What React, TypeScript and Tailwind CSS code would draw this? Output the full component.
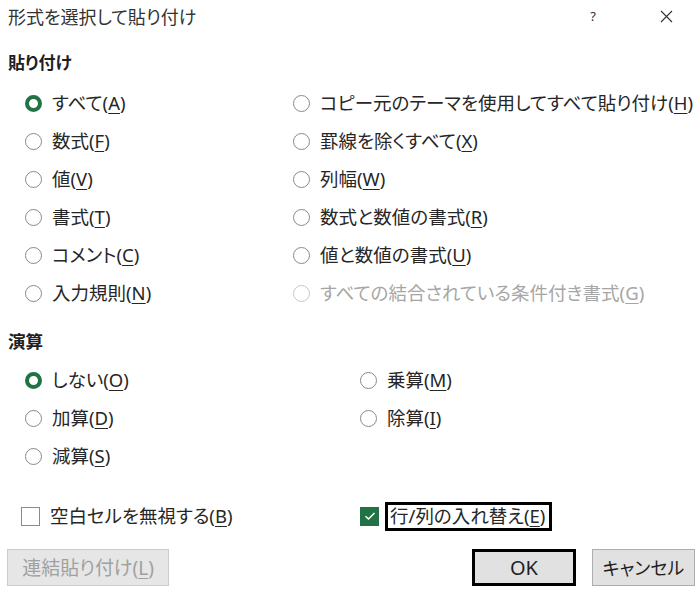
import React from 'react'

function Radio({ checked, disabled }: { checked?: boolean; disabled?: boolean }) {
  if (checked) {
    return <span className="box-border inline-block h-[17px] w-[17px] shrink-0 rounded-full border-[4px] border-[#217346] bg-white" />
  }
  return (
    <span
      className={
        'box-border inline-block h-[17px] w-[17px] shrink-0 rounded-full border bg-white ' +
        (disabled ? 'border-[#c8c8c8]' : 'border-[#8a8a8a]')
      }
    />
  )
}

function Label({ text, k, disabled }: { text: string; k: string; disabled?: boolean }) {
  return (
    <span className={'whitespace-nowrap leading-[24px] ' + (disabled ? 'text-[#a6a6a6]' : 'text-[#262626]')}>
      {text}(<span className="underline decoration-1 underline-offset-[3px]">{k}</span>)
    </span>
  )
}

function Opt({ text, k, checked, disabled }: { text: string; k: string; checked?: boolean; disabled?: boolean }) {
  return (
    <div className="flex h-[38px] items-center gap-[10px]">
      <Radio checked={checked} disabled={disabled} />
      <Label text={text} k={k} disabled={disabled} />
    </div>
  )
}

export default function App() {
  const pasteLeft = [
    { text: 'すべて', k: 'A', checked: true },
    { text: '数式', k: 'F' },
    { text: '値', k: 'V' },
    { text: '書式', k: 'T' },
    { text: 'コメント', k: 'C' },
    { text: '入力規則', k: 'N' },
  ]
  const pasteRight = [
    { text: 'コピー元のテーマを使用してすべて貼り付け', k: 'H' },
    { text: '罫線を除くすべて', k: 'X' },
    { text: '列幅', k: 'W' },
    { text: '数式と数値の書式', k: 'R' },
    { text: '値と数値の書式', k: 'U' },
    { text: 'すべての結合されている条件付き書式', k: 'G', disabled: true },
  ]

  return (
    <div className="h-[591px] w-[700px] overflow-hidden bg-white text-[18.5px] text-[#262626] [font-family:'Noto_Sans','Noto_Sans_CJK_JP',sans-serif] [font-feature-settings:'palt']">
      {/* title bar */}
      <div className="flex h-[33px] items-center pl-[8px]">
        <span className="text-[18px] leading-[24px] text-[#333]">形式を選択して貼り付け</span>
        <span className="ml-auto w-[20px] text-center text-[13px] text-[#333]">?</span>
        <span className="ml-[53px] mr-[24px] flex w-[20px] justify-center">
          <svg width="13" height="13" viewBox="0 0 13 13">
            <path d="M1 1L12 12M12 1L1 12" stroke="#333" strokeWidth="1.1" />
          </svg>
        </span>
      </div>

      <div className="mt-[17px] flex h-[26px] items-center pl-[8px] text-[17px] font-bold text-[#1f1f1f]">貼り付け</div>

      <div className="mt-[8px] grid grid-cols-[268px_1fr] pl-[25px]">
        <div className="flex flex-col">
          {pasteLeft.map((o) => (
            <Opt key={o.k} {...o} />
          ))}
        </div>
        <div className="flex flex-col">
          {pasteRight.map((o) => (
            <Opt key={o.k} {...o} />
          ))}
        </div>
      </div>

      <div className="mt-[16px] flex h-[26px] items-center pl-[8px] text-[17.5px] font-bold text-[#1f1f1f]">演算</div>

      <div className="mt-[7px] grid grid-cols-[335px_1fr] pl-[25px]">
        <div className="flex flex-col">
          <Opt text="しない" k="O" checked />
          <Opt text="加算" k="D" />
          <Opt text="減算" k="S" />
        </div>
        <div className="flex flex-col">
          <Opt text="乗算" k="M" />
          <Opt text="除算" k="I" />
        </div>
      </div>

      <div className="mt-[22px] grid h-[38px] grid-cols-[339px_1fr] items-center pl-[21px]">
        <div className="flex items-center gap-[10px]">
          <span className="box-border inline-block h-[19px] w-[19px] border-[1.5px] border-[#8a8a8a] bg-white" />
          <Label text="空白セルを無視する" k="B" />
        </div>
        <div className="flex items-center gap-[6px]">
          <span className="flex h-[19px] w-[19px] items-center justify-center bg-[#217346]">
            <svg width="12" height="10" viewBox="0 0 12 10">
              <path d="M1.5 5.2L4.5 8L10.5 2" fill="none" stroke="white" strokeWidth="1.5" />
            </svg>
          </span>
          <span className="flex h-[29px] items-center border-[3px] border-black pl-[2px] pr-[4px]">
            <Label text="行/列の入れ替え" k="E" />
          </span>
        </div>
      </div>

      <div className="mt-[14px] flex h-[37px] px-[7px] leading-[24px]">
        <div className="flex w-[162px] items-center justify-center border border-[#cccccc] bg-[#e6e6e6] text-[19px] text-[#a0a0a0]">
          <span>
            連結貼り付け(<span className="underline decoration-1 underline-offset-[3px]">L</span>)
          </span>
        </div>
        <div className="ml-auto flex w-[104px] items-center justify-center border-[3px] border-black bg-[#e1e1e1] text-[20px] text-[#1f1f1f]">
          OK
        </div>
        <div className="ml-[16px] mr-[-2px] flex w-[103px] items-center justify-center border border-[#adadad] bg-[#e1e1e1] text-[18px] text-[#1f1f1f]">
          キャンセル
        </div>
      </div>
    </div>
  )
}
